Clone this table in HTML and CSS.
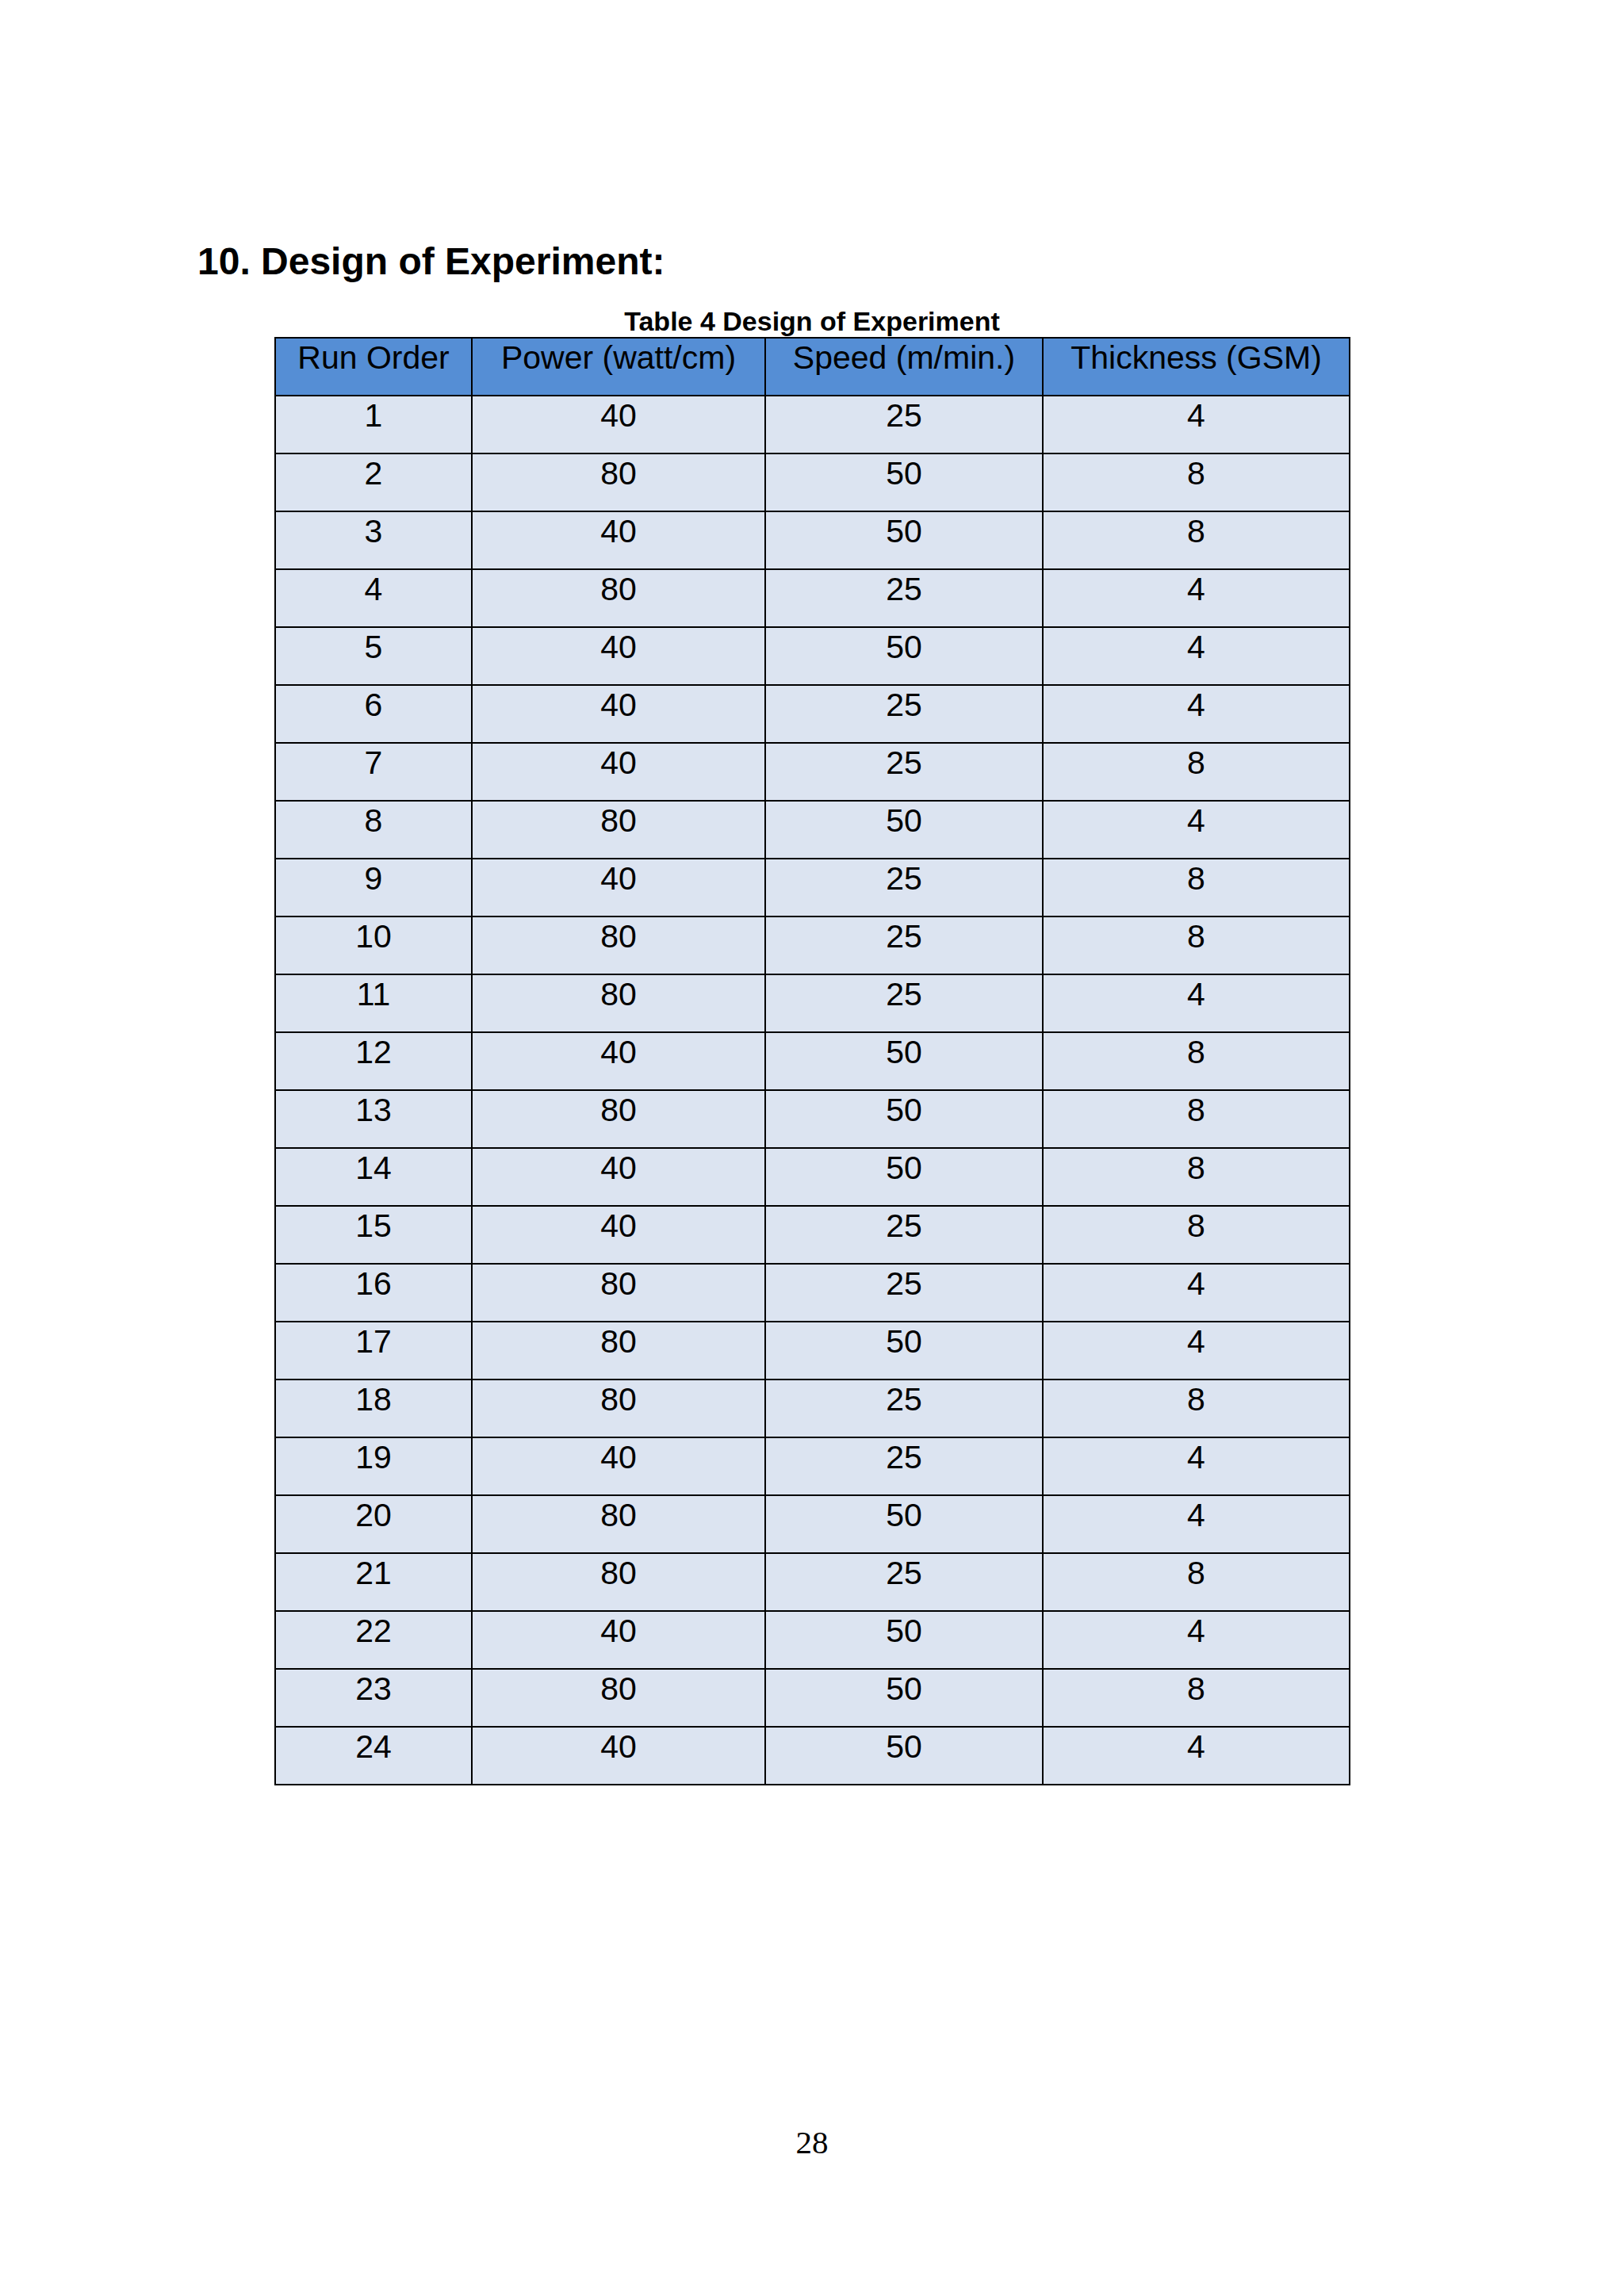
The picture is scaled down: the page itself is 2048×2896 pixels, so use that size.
FILE: index.html
```html
<!DOCTYPE html>
<html>
<head>
<meta charset="utf-8">
<title>Design of Experiment</title>
<link rel="stylesheet" href="styles.css">
</head>
<body>
<div class="page">
  <h2 class="heading">10. Design of Experiment:</h2>
  <div class="caption">Table 4 Design of Experiment</div>
  <table class="doe">
    <colgroup>
      <col class="c1"><col class="c2"><col class="c3"><col class="c4">
    </colgroup>
    <thead>
      <tr><th>Run Order</th><th>Power (watt/cm)</th><th>Speed (m/min.)</th><th>Thickness (GSM)</th></tr>
    </thead>
    <tbody>
      <tr><td>1</td><td>40</td><td>25</td><td>4</td></tr>
      <tr><td>2</td><td>80</td><td>50</td><td>8</td></tr>
      <tr><td>3</td><td>40</td><td>50</td><td>8</td></tr>
      <tr><td>4</td><td>80</td><td>25</td><td>4</td></tr>
      <tr><td>5</td><td>40</td><td>50</td><td>4</td></tr>
      <tr><td>6</td><td>40</td><td>25</td><td>4</td></tr>
      <tr><td>7</td><td>40</td><td>25</td><td>8</td></tr>
      <tr><td>8</td><td>80</td><td>50</td><td>4</td></tr>
      <tr><td>9</td><td>40</td><td>25</td><td>8</td></tr>
      <tr><td>10</td><td>80</td><td>25</td><td>8</td></tr>
      <tr><td>11</td><td>80</td><td>25</td><td>4</td></tr>
      <tr><td>12</td><td>40</td><td>50</td><td>8</td></tr>
      <tr><td>13</td><td>80</td><td>50</td><td>8</td></tr>
      <tr><td>14</td><td>40</td><td>50</td><td>8</td></tr>
      <tr><td>15</td><td>40</td><td>25</td><td>8</td></tr>
      <tr><td>16</td><td>80</td><td>25</td><td>4</td></tr>
      <tr><td>17</td><td>80</td><td>50</td><td>4</td></tr>
      <tr><td>18</td><td>80</td><td>25</td><td>8</td></tr>
      <tr><td>19</td><td>40</td><td>25</td><td>4</td></tr>
      <tr><td>20</td><td>80</td><td>50</td><td>4</td></tr>
      <tr><td>21</td><td>80</td><td>25</td><td>8</td></tr>
      <tr><td>22</td><td>40</td><td>50</td><td>4</td></tr>
      <tr><td>23</td><td>80</td><td>50</td><td>8</td></tr>
      <tr><td>24</td><td>40</td><td>50</td><td>4</td></tr>
    </tbody>
  </table>
  <div class="page-number">28</div>
</div>
</body>
</html>
```

FILE: styles.css
```css
html, body {
  margin: 0;
  padding: 0;
  background: #ffffff;
}

.page {
  width: 2048px;
  height: 2896px;
  box-sizing: border-box;
  padding-top: 302px;
  color: #000000;
  font-family: "Liberation Sans", Arial, sans-serif;
}

.heading {
  margin: 0 0 0 249px;
  font-size: 48px;
  line-height: 56px;
  font-weight: bold;
}

.caption {
  margin-top: 27px;
  text-align: center;
  font-size: 34px;
  line-height: 40px;
  font-weight: bold;
}

.doe {
  margin-left: 346px;
  width: 1357px;
  table-layout: fixed;
  border-collapse: collapse;
  font-size: 41px;
}

.doe .c1 { width: 248px; }
.doe .c2 { width: 370px; }
.doe .c3 { width: 350px; }
.doe .c4 { width: 387px; }

.doe tr {
  height: 73px;
}

.doe th,
.doe td {
  border: 2px solid #000000;
  padding: 1px 0 0 0;
  vertical-align: top;
  text-align: center;
  line-height: 46px;
  font-weight: normal;
}

.doe th {
  background: #558ed5;
}

.doe td {
  background: #dce4f1;
}

.page-number {
  margin-top: 427px;
  text-align: center;
  font-family: "Liberation Serif", "Times New Roman", serif;
  font-size: 41px;
  line-height: 47px;
}
```
